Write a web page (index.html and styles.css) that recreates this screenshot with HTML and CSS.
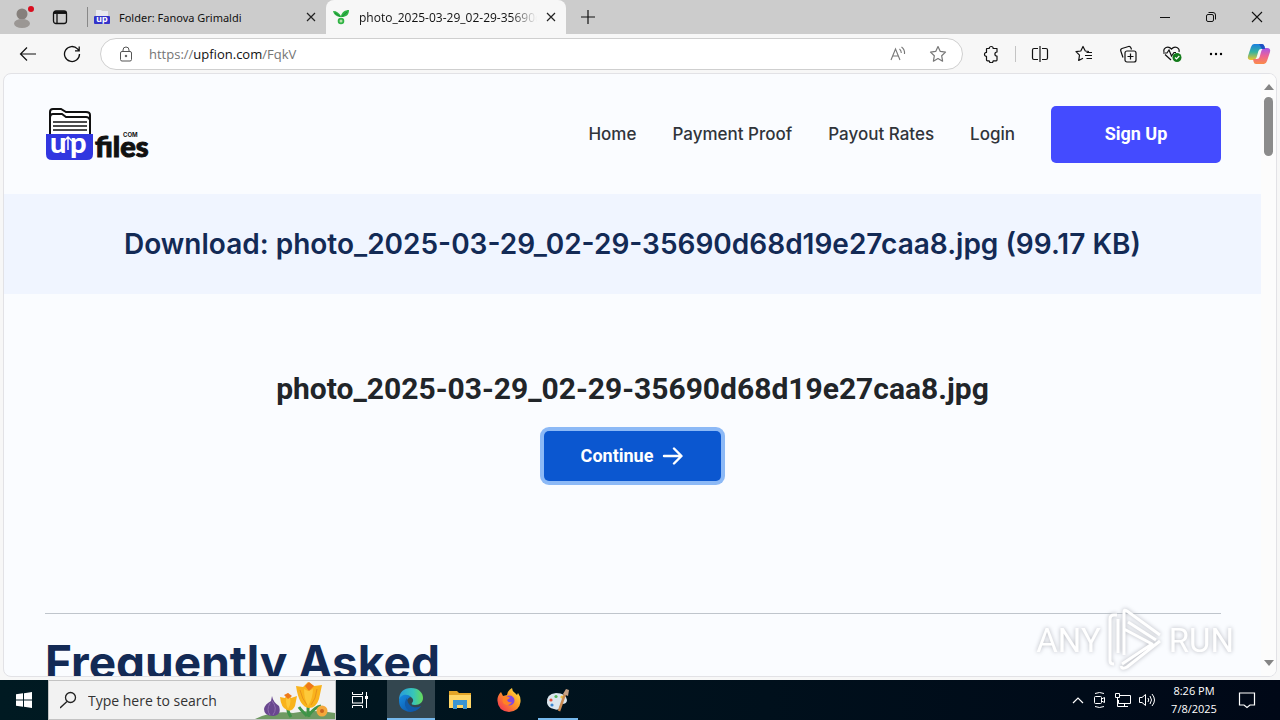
FILE: index.html
```html
<!DOCTYPE html>
<html lang="en">
<head>
  <meta charset="UTF-8">
  <meta name="viewport" content="width=device-width, initial-scale=1.0">
  <title>photo_2025-03-29_02-29-35690d68d19e27caa8.jpg</title>
  <link rel="stylesheet" href="styles.css">
</head>
<body>
  <div class="tab-bar">
    <button class="icon-button profile" aria-label="Profile">
      <svg width="24" height="28" viewBox="0 0 24 28"><circle cx="12" cy="11" r="5.5" fill="#86807c"/><ellipse cx="12" cy="20.500" rx="8" ry="4.500" fill="#9b9794"/><circle cx="21" cy="6" r="3" fill="#d90d1e"/></svg>
    </button>
    <button class="icon-button tab-actions" aria-label="Tab actions">
      <svg width="16" height="16" viewBox="0 0 16 16" fill="none" stroke="#111" stroke-width="1.3"><rect x="1.5" y="2" width="13" height="12.5" rx="2.5"/><path d="M2 4h12M5 5v9" /><path d="M2 3.5h12" stroke-width="2.5"/></svg>
    </button>
    <div class="tab">
      <svg class="favicon" width="16" height="16" viewBox="0 0 16 16"><path d="M2 1h5l1 1h6v6H2z" fill="#e9e9ef"/><rect y="7" width="16" height="8" rx="1" fill="#3333c9"/><text x="8" y="13" text-anchor="middle" class="favicon-text">up</text></svg>
      <span class="tab-title">Folder: Fanova Grimaldi</span>
      <button class="icon-button close" aria-label="Close tab"><svg width="10" height="10" viewBox="0 0 10 10" stroke="#222" stroke-width="1.2"><path d="M1 1l8 8M9 1L1 9"/></svg></button>
    </div>
    <div class="tab active">
      <svg class="favicon" width="18" height="18" viewBox="0 0 18 18"><path d="M1 3c4 0 6 2 8 5 1-4 4-6 8-6 0 5-3 7-7 7-5 0-8-2-9-6z" fill="#2fb344"/><circle cx="9" cy="13" r="2.4" fill="#b5e1a9" stroke="#2fb344" stroke-width="1.8"/><path d="M3 5l5 3.500M15 4l-5 4.500" stroke="#168f35" stroke-width="1"/></svg>
      <span class="tab-title">photo_2025-03-29_02-29-35690d68d19e27caa8.jpg</span>
      <button class="icon-button close" aria-label="Close tab"><svg width="10" height="10" viewBox="0 0 10 10" stroke="#222" stroke-width="1.2"><path d="M1 1l8 8M9 1L1 9"/></svg></button>
    </div>
    <button class="icon-button new-tab" aria-label="New tab"><svg width="14" height="14" viewBox="0 0 14 14" stroke="#111" stroke-width="1.2"><path d="M7 0v14M0 7h14"/></svg></button>
    <div class="window-controls">
      <button class="icon-button" aria-label="Minimize"><svg width="10" height="10" viewBox="0 0 10 10" stroke="#111"><path d="M0 5.500h10"/></svg></button>
      <button class="icon-button" aria-label="Restore"><svg width="12" height="12" viewBox="0 0 12 12" fill="none" stroke="#111"><rect x="1.500" y="3.500" width="7" height="7" rx="1.500"/><path d="M3.500 1.500H8a2.500 2.500 0 0 1 2.500 2.500v4.500"/></svg></button>
      <button class="icon-button" aria-label="Close"><svg width="12" height="12" viewBox="0 0 12 12" stroke="#111" stroke-width="1.100"><path d="M1 1l10 10M11 1L1 11"/></svg></button>
    </div>
  </div>

  <div class="toolbar">
    <button class="icon-button nav-button" aria-label="Back"><svg width="18" height="16" viewBox="0 0 18 16" fill="none" stroke="#111" stroke-width="1.2"><path d="M17 8H2M8 1.500L1.500 8 8 14.500"/></svg></button>
    <button class="icon-button nav-button" aria-label="Refresh"><svg width="18" height="18" viewBox="0 0 18 18" fill="none" stroke="#111" stroke-width="1.300"><path d="M16.500 9a7.500 7.500 0 1 1-2-5.100L16 5.500M16.200 1.500v4.300h-4.200"/></svg></button>
    <div class="address-bar">
      <svg width="14" height="16" viewBox="0 0 14 16" fill="none" stroke="#555"><rect x="1.500" y="5.500" width="11" height="9.500" rx="1.500"/><path d="M4 5.500V4a3 3 0 0 1 6 0v1.500"/><circle cx="7" cy="10" r=".8" fill="#333"/></svg>
      <span class="url">https://<b>upfion.com</b>/FqkV</span>
      <button class="icon-button" aria-label="Read aloud"><svg width="16" height="16" viewBox="0 0 16 16" fill="none" stroke="#777" stroke-width="1.100"><path d="M1 14L5.500 3 10 14M2.700 10h5.600M9.500 3q1.800 1.500 1.800 4M11.500 1q3.500 2.500 3 7"/></svg></button>
      <button class="icon-button" aria-label="Add to favorites"><svg width="18" height="18" viewBox="0 0 18 18" fill="none" stroke="#777" stroke-width="1.200" stroke-linejoin="round"><path d="M9 1.500l2.300 4.900 5.200.7-3.800 3.700.9 5.400L9 13.600l-4.600 2.600.9-5.400L1.500 7.100l5.200-.7z"/></svg></button>
    </div>
    <div class="extensions">
      <button class="icon-button" aria-label="Extensions"><svg width="18" height="18" viewBox="0 0 18 18" fill="none" stroke="#111" stroke-width="1.200" stroke-linejoin="round"><path d="M5 3.500h2.200a2 2 0 1 1 4 0H15V7a2 2 0 1 0 0 4.200V15q0 .8-.8.800h-3a2 2 0 0 1-4 0H5.500q-1 0-1-1v-3.400a2 2 0 1 1 0-4V4z"/></svg></button>
      <span class="divider"></span>
      <button class="icon-button" aria-label="Split screen"><svg width="18" height="18" viewBox="0 0 18 18" fill="none" stroke="#111" stroke-width="1.200"><path d="M9 1v16M7 3.500H3A1.500 1.500 0 0 0 1.500 5v8A1.500 1.500 0 0 0 3 14.500h4M11 3.500h4A1.500 1.500 0 0 1 16.500 5v8a1.500 1.500 0 0 1-1.500 1.500h-4"/></svg></button>
      <button class="icon-button" aria-label="Favorites"><svg width="18" height="18" viewBox="0 0 18 18" fill="none" stroke="#111" stroke-width="1.200" stroke-linejoin="round"><path d="M14 6.500L10.300 6 8 1.500 5.800 6l-4.800.7 3.500 3.500-.8 5.300L8 13.200M11.500 7.500H17M10 10.500h7M11.500 13.500H17"/></svg></button>
      <button class="icon-button" aria-label="Collections"><svg width="18" height="18" viewBox="0 0 18 18" fill="none" stroke="#111" stroke-width="1.200"><rect x="6" y="6" width="11" height="11" rx="2"/><path d="M11.500 8.500v6M8.500 11.500h6M4 12.500L1.800 6A2 2 0 0 1 3 3.500L9.500 1.500A2 2 0 0 1 12 3l.5 1.500"/></svg></button>
      <button class="icon-button" aria-label="Browser essentials"><svg width="20" height="18" viewBox="0 0 20 18" fill="none" stroke="#111" stroke-width="1.200"><path d="M9 15L3 9.500M2 7C1 3 6 0 9.500 4 13 0 18 3 17 7M1 8h4l2-3 2.500 6L12 7.500h2"/><circle cx="15" cy="12.500" r="4.500" fill="#137b1b" stroke="none"/><path d="M13 12.500l1.500 1.500 2.800-3" stroke="#fff"/></svg></button>
      <button class="icon-button" aria-label="More"><svg width="14" height="4" viewBox="0 0 14 4"><circle cx="2" cy="2" r="1.200"/><circle cx="7" cy="2" r="1.200"/><circle cx="12" cy="2" r="1.200"/></svg></button>
      <button class="icon-button copilot" aria-label="Copilot">
        <svg width="24" height="24" viewBox="0 0 24 24">
          <defs>
            <linearGradient id="cpA" x2="0" y2="1"><stop offset="0" stop-color="#1b7fe0"/><stop offset=".5" stop-color="#35b2a0"/><stop offset="1" stop-color="#f0c52c"/></linearGradient>
            <linearGradient id="cpB" x2="0" y2="1"><stop offset="0" stop-color="#a756e8"/><stop offset=".5" stop-color="#ed6395"/><stop offset="1" stop-color="#fb8c48"/></linearGradient>
          </defs>
          <path d="M7 2h8q2 0 2.500 2.500L18 7h-4q-2 0-2.600 2L10 14q-1 4-4 4H4q-4 0-3-4L4 5q1-3 3-3z" fill="url(#cpA)"/>
          <path d="M17 22H9q-2 0-2.500-2.500L6 17h4q2 0 2.600-2L14 10q1-4 4-4h2q4 0 3 4l-3 9q-1 3-3 3z" fill="url(#cpB)"/>
          <path d="M12 2h3q2 0 2.500 2.500L18 7h-3z" fill="#1f50c4"/>
        </svg>
      </button>
    </div>
  </div>

  <div class="viewport">
    <div class="page">
      <header class="site-header">
        <a href="#" class="logo" aria-label="upfiles.com">
          <svg width="110" height="54" viewBox="0 0 110 54">
            <path d="M5 28V5q0-3 3-3h8l5 3h20q4 0 4 3v20" fill="#fff" stroke="#111" stroke-width="2"/>
            <path d="M5 11q0-4 3-4h9l4 3h20q3 0 4 3" fill="none" stroke="#111" stroke-width="2"/>
            <path d="M8 15h34M8 19h34M8 23h34" stroke="#111" stroke-width="1.500"/>
            <path d="M1 27h47v20q0 6-6 6H7q-6 0-6-6z" fill="#3136e0"/>
            <text x="5" y="46" class="logo-up">u</text>
            <text x="25" y="46" class="logo-up">p</text>
            <path d="M19 34l4-4 4 4M23 31v12" fill="none" stroke="#fff" stroke-width="1.500"/>
            <text x="50" y="50" class="logo-files">files</text>
            <text x="78" y="30" class="logo-com">COM</text>
          </svg>
        </a>
        <nav class="site-nav">
          <a href="#">Home</a>
          <a href="#">Payment Proof</a>
          <a href="#">Payout Rates</a>
          <a href="#">Login</a>
          <a href="#" class="sign-up">Sign Up</a>
        </nav>
      </header>
      <section class="banner">
        <h1>Download: photo_2025-03-29_02-29-35690d68d19e27caa8.jpg (99.17 KB)</h1>
      </section>
      <main class="download">
        <h2>photo_2025-03-29_02-29-35690d68d19e27caa8.jpg</h2>
        <button class="continue">Continue
          <svg width="22" height="20" viewBox="0 0 22 20" fill="none" stroke="#fff" stroke-width="2.400" stroke-linecap="round" stroke-linejoin="round"><path d="M2 11h17M12 3.500l7.500 7.500-7.500 7.500"/></svg>
        </button>
      </main>
      <section class="faq">
        <h2>Frequently Asked</h2>
      </section>
    </div>
    <div class="scrollbar">
      <svg width="10" height="6" viewBox="0 0 10 6"><path d="M0 6l5-6 5 6z" fill="#858585"/></svg>
      <div class="thumb"></div>
      <svg width="10" height="6" viewBox="0 0 10 6"><path d="M0 0h10L5 6z" fill="#858585"/></svg>
    </div>
    <div class="watermark">
      <span>ANY</span>
      <svg width="60" height="66" viewBox="0 0 60 66" fill="none" stroke="#fff" stroke-width="3" stroke-linejoin="round">
        <path d="M12 8H9q-4 0-4 4v42q0 3 4 3M13 12v34"/>
        <path d="M19 48V5q0-3 3-1l33 24M23 15l28 18M19 22l28 15-30 20M55 34L22 60q-5 3-6-1"/>
      </svg>
      <span>RUN</span>
    </div>
  </div>

  <div class="taskbar">
    <button class="task start" aria-label="Start"><svg width="16" height="16" viewBox="0 0 16 16" fill="#fff"><path d="M0 2.300L7 1.300V7.500H0zM8 1.200L16 0v7.500H8zM0 8.500h7v6.200L0 13.700zM8 8.500h8V16l-8-1.200z"/></svg></button>
    <label class="search">
      <svg width="18" height="18" viewBox="0 0 18 18" fill="none" stroke="#222" stroke-width="1.300"><circle cx="10.500" cy="6.500" r="5"/><path d="M7 10.500L0 17"/></svg>
      <input type="text" placeholder="Type here to search" aria-label="Search">
      <svg class="flowers" width="80" height="38" viewBox="0 0 80 38">
        <path d="M0 38q18-9 38-6 20-4 42 0v6z" fill="#6f9a63"/>
        <path d="M54 36q-2-8 0-14M54 34q6-8 12-9M36 36q-4-6-3-10M52 35q-6-6-8-9" stroke="#3f9448" stroke-width="3" fill="none"/>
        <path d="M17 15q1 6 7 10 3 9-6 10-9 0-9-7 1-5 7-8z" fill="#69478f"/><path d="M17 20q6 7 1 14M15 22q-4 7 0 12" stroke="#8d6cae" fill="none"/>
        <path d="M25 16l5 1 3-5 3 5 6-2-2 10q-3 6-8 4-6-2-7-13z" fill="#f9b31c"/><path d="M33 12q-4 8 0 16 5-8 0-16z" fill="#fdc93b"/><path d="M29 14l4-2 4 3-4 3z" fill="#ee7919"/>
        <path d="M41 5l7 1 5-5 6 4 8-1-3 14q-3 9-10 9-10-1-13-22z" fill="#f9b31c"/><path d="M45 9q2 9 7 15M62 8q-1 10-6 16" stroke="#e8921a" fill="none"/><path d="M49 8q0 10 4 17 5-8 5-17l-5 2z" fill="#fdc93b"/><path d="M50 5l4-4 5 4-5 5z" fill="#ee7919"/>
        <circle cx="67" cy="30" r="5.500" fill="#f4a83c"/><circle cx="67" cy="30" r="2" fill="#c8641e"/>
      </svg>
    </label>
    <button class="task task-view" aria-label="Task view"><svg width="18" height="18" viewBox="0 0 18 18" fill="none" stroke="#fff"><path d="M1.500 1v2.500h10V1M1.500 17v-2.500h10V17M15.500 1v16"/><rect x="1.500" y="5.500" width="10" height="6.500"/><path d="M15.500 5v3" stroke-width="3"/></svg></button>
    <button class="task open current" aria-label="Edge">
      <svg width="26" height="26" viewBox="0 0 26 26">
        <defs>
          <linearGradient id="edA" x2="1"><stop offset="0" stop-color="#279bdc"/><stop offset=".6" stop-color="#37c5ba"/><stop offset="1" stop-color="#66db58"/></linearGradient>
          <linearGradient id="edB" x2="1" y2="1"><stop offset="0" stop-color="#168be0"/><stop offset="1" stop-color="#0c4b9c"/></linearGradient>
        </defs>
        <path d="M1 13C1 5 6 1 13 1c8 0 12 5 12 10 0 4-3 7-8 7-3 0-4-1-3-2 3-3 0-7-5-7-4 0-7 2-8 4z" fill="url(#edA)"/>
        <path d="M1 13c1-5 8-7 12-3-6 1-6 12 2 12 3 0 5-1 8-3-5 7-12 7-17 4-4-2-5-6-5-10z" fill="url(#edB)"/>
        <path d="M9 11c-4 5-2 11 3 13 5 1 9-2 11-5-4 2-13 3-14-8z" fill="#115ba9"/>
      </svg>
    </button>
    <button class="task" aria-label="File Explorer"><svg width="22" height="20" viewBox="0 0 22 20"><path d="M0 1h8l2 2h12v5H0z" fill="#e3a528"/><path d="M0 5h22v13H0z" fill="#ffd667"/><path d="M4 10h14v9h-4v-4H8v4H4z" fill="#3a95d3"/></svg></button>
    <button class="task" aria-label="Firefox">
      <svg width="24" height="24" viewBox="0 0 24 24">
        <defs><linearGradient id="ff" x1="1" x2="0" y2="1"><stop offset="0" stop-color="#fff04a"/><stop offset=".45" stop-color="#ff9724"/><stop offset="1" stop-color="#f0245d"/></linearGradient></defs>
        <path d="M4 4l2 4 4-1q1-5 5-7 0 3 3 5l2 2 1-2q3 4 2.500 9-1 9-11.500 10Q1 23 .5 13 0 8 4 4z" fill="url(#ff)"/>
        <circle cx="12.500" cy="12.500" r="5" fill="#8248df"/><path d="M7 9q3-2 6 1l-3 2q1 3 5 2-3 5-8 2-3-3 0-7z" fill="#ff8225"/>
      </svg>
    </button>
    <button class="task open" aria-label="Paint">
      <svg width="24" height="24" viewBox="0 0 24 24"><path d="M1 15Q0 6 10 5q10 0 11 7 0 4-5 4-3 1-2 4-2 3-6 1-6-1-7-6z" fill="#dbe6ee"/><circle cx="5" cy="12" r="1.600" fill="#e6503e"/><circle cx="10" cy="8.500" r="1.600" fill="#58b85c"/><circle cx="6" cy="17" r="1.600" fill="#3b86d1"/><circle cx="16" cy="9" r="1.600" fill="#f1c33d"/><path d="M13 23l6-17" stroke="#c98a51" stroke-width="2.500"/><path d="M17 6l3-5 3 1-1 6z" fill="#c7a184"/></svg>
    </button>
    <div class="tray">
      <svg width="12" height="8" viewBox="0 0 12 8" fill="none" stroke="#fff" stroke-width="1.200"><path d="M1 7l5-5 5 5"/></svg>
      <svg width="18" height="18" viewBox="0 0 18 18" fill="none" stroke="#fff"><rect x="4.500" y="5.500" width="7" height="7" rx="1"/><path d="M11.500 8l3-1.500v5l-3-1.500M5 2.500q4.500-2 9 0M5 15.500q4.500 2 9 0"/></svg>
      <svg width="18" height="16" viewBox="0 0 18 16" fill="none" stroke="#fff"><path d="M6 3.500h10.500v8H4.500V8M10.500 11.500v3M7 14.500h7"/><path d="M1.500 1.500h4v4h-4zM3.500 5.500v9H7"/></svg>
      <svg width="18" height="16" viewBox="0 0 18 16" fill="none" stroke="#fff"><path d="M1.500 5.500H4l3.500-3v11l-3.500-3H1.500zM10 6q1.500 2 0 4M12 4q3 4 0 8M14 2q5 6 0 12"/></svg>
      <div class="clock"><span>8:26 PM</span><span>7/8/2025</span></div>
      <svg width="18" height="18" viewBox="0 0 18 18" fill="none" stroke="#fff" stroke-width="1.200"><path d="M1.500 2h15v12H12l-3 2.500L6 14H1.500z"/></svg>
    </div>
  </div>
</body>
</html>
```
FILE: styles.css
```css
* {
  margin: 0;
  padding: 0;
  box-sizing: border-box;
}

body {
  height: 100vh;
  display: flex;
  flex-direction: column;
  overflow: hidden;
  background: #f7f7f7;
  font-family: "Open Sans", "Noto Sans", sans-serif;
  color: #111;
}

button {
  border: none;
  background: none;
  font: inherit;
  color: inherit;
}

a {
  color: inherit;
  text-decoration: none;
}

svg {
  flex-shrink: 0;
}

.icon-button {
  display: flex;
  align-items: center;
  justify-content: center;
  flex-shrink: 0;
}

/* Tabs */
.tab-bar {
  height: 34px;
  flex-shrink: 0;
  display: flex;
  align-items: center;
  background: #cccccc;
}

.profile {
  width: 44px;
}

.tab-actions {
  width: 32px;
  margin-right: 11px;
}

.tab {
  width: 239px;
  height: 34px;
  display: flex;
  align-items: center;
  gap: 9px;
  padding: 0 10px 0 6px;
  font-size: 12px;
}

.tab:not(.active) {
  height: 20px;
  border-left: 1px solid #888;
  font-family: "Noto Sans", "Open Sans", sans-serif;
  font-size: 11px;
}

.tab.active {
  width: 240px;
  background: #f7f7f7;
  border-radius: 8px 8px 0 0;
}

.tab-title {
  flex: 1;
  overflow: hidden;
  white-space: nowrap;
}

.active .tab-title {
  mask-image: linear-gradient(to right, #000 85%, transparent);
}

.favicon-text {
  font: bold 9px Inter, sans-serif;
  fill: #fff;
}

.new-tab {
  width: 43px;
}

.window-controls {
  margin-left: auto;
  display: flex;
}

.window-controls button {
  width: 46px;
  height: 34px;
}

/* Toolbar */
.toolbar {
  height: 39px;
  flex-shrink: 0;
  display: flex;
  align-items: center;
  padding-left: 6px;
}

.nav-button {
  width: 44px;
}

.address-bar {
  flex: 1;
  height: 32px;
  margin-left: 6px;
  padding: 0 12px 0 18px;
  display: flex;
  align-items: center;
  gap: 16px;
  background: #fff;
  border: 1px solid #cfcfcf;
  border-radius: 16px;
}

.url {
  flex: 1;
  font-size: 13px;
  color: #757575;
}

.url b {
  font-weight: 400;
  color: #111;
}

.address-bar .icon-button {
  width: 24px;
}

.extensions {
  display: flex;
  align-items: center;
  padding-left: 6px;
}

.extensions .icon-button {
  width: 44px;
}

.extensions .copilot {
  width: 42px;
}

.divider {
  width: 1px;
  height: 16px;
  margin: 0 2px;
  background: #c4c4c4;
}

/* Web page */
.viewport {
  position: relative;
  flex: 1;
  min-height: 0;
  margin: 0 3px 3px;
  display: flex;
  overflow: hidden;
  background: #fafcff;
  border: 1px solid #e2e2e6;
  border-radius: 8px;
}

.page {
  flex: 1;
  overflow: hidden;
}

.site-header {
  height: 120px;
  padding: 0 40px 0 41px;
  display: flex;
  align-items: center;
  justify-content: space-between;
}

.logo svg {
  display: block;
}

.logo-up {
  font: 900 29px Lato, sans-serif;
  fill: #fff;
}

.logo-files {
  font: 900 29px Lato, sans-serif;
  fill: #111;
  stroke: #111;
}

.logo-com {
  font: 700 6px Inter, sans-serif;
  fill: #111;
}

.site-nav {
  display: flex;
  align-items: center;
  gap: 36px;
  font: 500 17px Inter, sans-serif;
  color: #30343a;
}

.sign-up {
  width: 170px;
  padding: 17px 0 19px;
  background: #444bff;
  border-radius: 5px;
  color: #fff;
  text-align: center;
  font: 700 18px/21px Roboto, sans-serif;
}

.banner {
  padding: 32px 0;
  background: #f0f5ff;
  text-align: center;
}

h1 {
  font: 600 28px/36px Inter, sans-serif;
  color: #132a55;
}

.download {
  padding: 76px 40px 0;
  display: flex;
  flex-direction: column;
  align-items: center;
  gap: 24px;
}

.download h2 {
  font: 700 30px/37px Roboto, sans-serif;
  color: #212529;
}

.continue {
  height: 50px;
  padding: 0 37px 2px;
  display: flex;
  align-items: center;
  gap: 9px;
  background: #0b57d0;
  border-radius: 5px;
  box-shadow: 0 0 0 4px #8cb9f6;
  color: #fff;
  font: 700 18px Roboto, sans-serif;
}

.faq {
  margin: 132px 40px 0 41px;
  padding-top: 19px;
  border-top: 1px solid #bfc5cc;
}

.faq h2 {
  font: 700 46px/58px Inter, sans-serif;
  color: #132a55;
}

.scrollbar {
  width: 15px;
  padding: 10px 0;
  display: flex;
  flex-direction: column;
  align-items: center;
  background: #fcfcfc;
}

.thumb {
  width: 9px;
  height: 59px;
  margin: 7px 0 auto;
  background: #8b8b8b;
  border-radius: 5px;
}

.watermark {
  position: absolute;
  right: 42px;
  bottom: 3px;
  display: flex;
  align-items: center;
  gap: 4px;
  color: #fff;
  font: 33px Roboto, sans-serif;
  filter: drop-shadow(0 0 2px #b4b6bd);
}

/* Taskbar */
.taskbar {
  height: 40px;
  flex-shrink: 0;
  display: flex;
  background: linear-gradient(to right, #001a22, #00101c 60%, #000817);
}

.task {
  width: 48px;
  margin-right: 1px;
  display: flex;
  align-items: center;
  justify-content: center;
}

.start {
  margin-right: 0;
}

.task-view {
  margin-right: 3px;
}

.open {
  background: linear-gradient(#76b9ed, #76b9ed) bottom / 40px 2px no-repeat;
}

.open.current {
  background: linear-gradient(#76b9ed, #76b9ed) bottom / 48px 2px no-repeat #33464f;
}

.search {
  width: 288px;
  padding-left: 11px;
  display: flex;
  align-items: center;
  gap: 10px;
  background: #f2f2f2;
  border: 1px solid #c3c3c3;
}

.search input {
  flex: 1;
  min-width: 0;
  border: none;
  outline: none;
  background: none;
  font: 14px "Open Sans", "Noto Sans", sans-serif;
}

.search input::placeholder {
  color: #333;
}

.tray {
  margin-left: auto;
  padding-right: 24px;
  display: flex;
  align-items: center;
  gap: 6px;
  color: #fff;
}

.clock {
  width: 52px;
  margin: 0 12px 0 6px;
  display: flex;
  flex-direction: column;
  align-items: center;
  font-size: 11px;
  line-height: 18px;
}
```
